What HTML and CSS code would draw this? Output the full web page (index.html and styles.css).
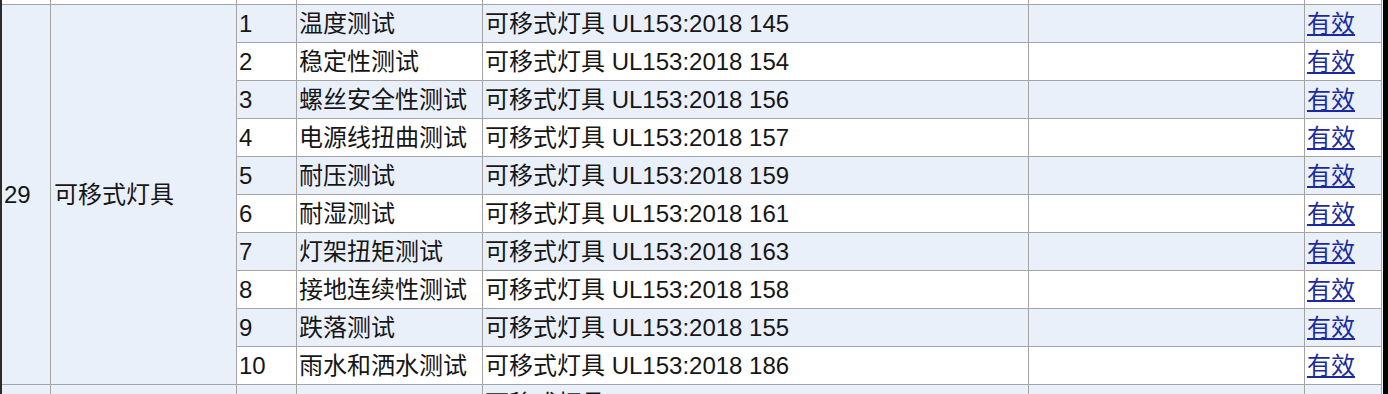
FILE: index.html
```html
<!DOCTYPE html>
<html lang="zh">
<head>
<meta charset="utf-8">
<title>可移式灯具</title>
<link rel="stylesheet" href="styles.css">
</head>
<body>
<div class="frame">
  <div class="sheet">
    <div class="cell w"></div><div class="cell w"></div><div class="cell w"></div><div class="cell w"></div><div class="cell w"></div><div class="cell w"></div><div class="cell w"></div>

    <div class="cell merged no">29</div>
    <div class="cell merged name">可移式灯具</div>

    <div class="cell b">1</div><div class="cell b">温度测试</div><div class="cell b">可移式灯具 UL153:2018 145</div><div class="cell b"></div><div class="cell b"><a href="#">有效</a></div>
    <div class="cell w">2</div><div class="cell w">稳定性测试</div><div class="cell w">可移式灯具 UL153:2018 154</div><div class="cell w"></div><div class="cell w"><a href="#">有效</a></div>
    <div class="cell b">3</div><div class="cell b">螺丝安全性测试</div><div class="cell b">可移式灯具 UL153:2018 156</div><div class="cell b"></div><div class="cell b"><a href="#">有效</a></div>
    <div class="cell w">4</div><div class="cell w">电源线扭曲测试</div><div class="cell w">可移式灯具 UL153:2018 157</div><div class="cell w"></div><div class="cell w"><a href="#">有效</a></div>
    <div class="cell b">5</div><div class="cell b">耐压测试</div><div class="cell b">可移式灯具 UL153:2018 159</div><div class="cell b"></div><div class="cell b"><a href="#">有效</a></div>
    <div class="cell w">6</div><div class="cell w">耐湿测试</div><div class="cell w">可移式灯具 UL153:2018 161</div><div class="cell w"></div><div class="cell w"><a href="#">有效</a></div>
    <div class="cell b">7</div><div class="cell b">灯架扭矩测试</div><div class="cell b">可移式灯具 UL153:2018 163</div><div class="cell b"></div><div class="cell b"><a href="#">有效</a></div>
    <div class="cell w">8</div><div class="cell w">接地连续性测试</div><div class="cell w">可移式灯具 UL153:2018 158</div><div class="cell w"></div><div class="cell w"><a href="#">有效</a></div>
    <div class="cell b">9</div><div class="cell b">跌落测试</div><div class="cell b">可移式灯具 UL153:2018 155</div><div class="cell b"></div><div class="cell b"><a href="#">有效</a></div>
    <div class="cell w">10</div><div class="cell w">雨水和洒水测试</div><div class="cell w">可移式灯具 UL153:2018 186</div><div class="cell w"></div><div class="cell w"><a href="#">有效</a></div>

    <div class="cell b"></div><div class="cell b"></div><div class="cell b"></div><div class="cell b"></div><div class="cell b">可移式灯具 UL153:2018 188</div><div class="cell b"></div><div class="cell b"></div>
  </div>
  <div class="gap"></div>
</div>
</body>
</html>
```

FILE: styles.css
```css
html, body {
  margin: 0;
  padding: 0;
  background: #ffffff;
}

body {
  width: 1388px;
  height: 394px;
  overflow: hidden;
  font-family: "Liberation Sans", "Noto Sans CJK SC", sans-serif;
  font-size: 24px;
  color: #161616;
}

.frame {
  display: flex;
  height: 394px;
  overflow: hidden;
  border-left: 2px solid #2b2b2b;
  border-right: 5px solid #050505;
}

.sheet {
  width: 1380px;
  flex: none;
  display: grid;
  grid-template-columns: 49px 186px 60px 186px 546px 276px 77px;
  grid-auto-rows: 38px;
  margin-top: -33px;
  align-self: flex-start;
}

.gap {
  flex: 1;
  background: #f4f6fa;
}

.cell {
  box-sizing: border-box;
  border-right: 1px solid #a4a4a4;
  border-bottom: 1px solid #a4a4a4;
  display: flex;
  align-items: center;
  padding-left: 2px;
  line-height: 1;
  white-space: nowrap;
  overflow: hidden;
}

.cell.w {
  background: #ffffff;
}

.cell.b {
  background: #eaf0fa;
}

.cell.merged {
  grid-row: span 10;
  background: #eaf0fa;
}

.cell.no {
  grid-column: 1;
}

.cell.name {
  grid-column: 2;
  padding-left: 3px;
}

.cell a {
  color: #1b2aa3;
  text-decoration: underline;
  text-underline-offset: 2px;
}
```
